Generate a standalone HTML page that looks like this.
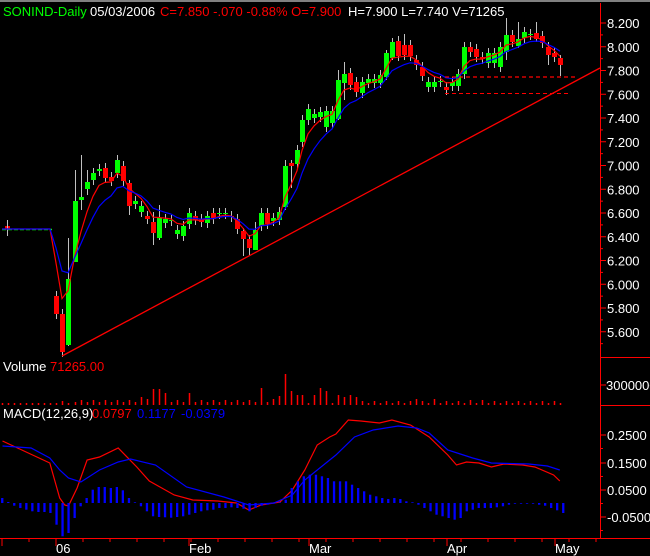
<!DOCTYPE html>
<html><head><meta charset="utf-8"><style>
html,body{margin:0;padding:0;background:#000;width:650px;height:556px;overflow:hidden}
svg{display:block}
text{font-family:"Liberation Sans",sans-serif;font-size:13px}
</style></head><body>
<svg id="s" width="650" height="556" viewBox="0 0 650 556" xmlns="http://www.w3.org/2000/svg">
<rect width="650" height="556" fill="#000"/>
<rect x="0" y="0" width="650" height="2" fill="#808080"/>
<text x="3" y="16" fill="#00ff00">SONIND-Daily</text>
<text x="90" y="16" fill="#fff">05/03/2006</text>
<text x="160" y="16" fill="#ff0000">C=7.850  -.070  -0.88%  O=7.900</text>
<text x="348" y="16" fill="#fff">H=7.900  L=7.740  V=71265</text>
<text x="3" y="371" fill="#fff">Volume</text>
<text x="50" y="371" fill="#ff0000">71265.00</text>
<text x="3" y="418" fill="#fff">MACD(12,26,9)</text>
<text x="92" y="418" fill="#ff0000">0.0797</text>
<text x="137" y="418" fill="#0000ff">0.1177</text>
<text x="181" y="418" fill="#0000ff">-0.0379</text>
<g id="g"></g>
</svg>
<script>
var g=document.getElementById('g'),h='';
function L(x1,y1,x2,y2,c,w,d){h+='<line x1="'+x1+'" y1="'+y1+'" x2="'+x2+'" y2="'+y2+'" stroke="'+c+'" stroke-width="'+(w||1)+'"'+(d?' stroke-dasharray="'+d+'"':'')+'/>';}
function T(x,y,t){h+='<text x="'+x+'" y="'+y+'" fill="#fff">'+t+'</text>';}
L(600.5,3,600.5,538,'#f00');
L(0,538.5,650,538.5,'#f00');
L(600,357.5,650,357.5,'#f00');L(600,405.5,650,405.5,'#f00');
var labs=['8.200','8.000','7.800','7.600','7.400','7.200','7.000','6.800','6.600','6.400','6.200','6.000','5.800','5.600'];
for(var i=0;i<labs.length;i++){var y=23+i*23.75;L(600,y,606,y,'#f00');T(607,y+5,labs[i]);
 L(600,y+11.9,603,y+11.9,'#f00');}
T(606,390,'3000000');L(600,385,606,385,'#f00');
[[435,'0.2500'],[463,'0.1500'],[490,'0.0500'],[517,'-0.0500']].forEach(function(a){L(600,a[0],606,a[0],'#f00');T(607,a[0]+5,a[1]);L(600,a[0]+13.5,603,a[0]+13.5,'#f00');});
[2,56,189,309,447,555].forEach(function(x){L(x,538,x,546,'#f00');});
for(var x=29;x<600;x+=27){L(x,538,x,542,'#f00');}
T(56,553,'06');T(189,553,'Feb');T(309,553,'Mar');T(447,553,'Apr');T(555,553,'May');
var C=[[56,296,314,0],[62,314,352,0],[68,345,279,1],[75,262,201,1],[81,200,197,1],[87,189,182,1],[93,180,173,1],[99,171,169,1],[105,168,178,0],[111,177,181,0],[117,173,160,1],[123,166,181,0],[129,183,206,0],[135,204,201,1],[141,212,206,1],[147,216,219,0],[153,222,233,0],[159,238,218,1],[165,223,219,1],[171,221,220,1],[177,234,230,1],[183,236,226,1],[189,224,213,1],[195,216,220,0],[201,219,222,0],[207,223,216,1],[213,213,219,0],[219,214,213,1],[225,214,213,1],[231,216,217,0],[237,219,229,0],[243,231,239,0],[249,239,248,0],[255,250,230,1],[261,226,213,1],[267,213,224,0],[273,221,218,1],[279,220,212,1],[285,207,166,1],[291,163,166,0],[297,164,150,1],
[302,142,120,1],[308,120,109,1],[314,118,114,1],[320,117,112,1],[326,127,111,1],[332,123,111,1],[338,119,80,1],[344,83,74,1],[350,73,85,0],[356,82,92,0],[362,93,82,1],[368,83,79,1],[374,83,79,1],[380,83,75,1],[386,77,53,1],[392,58,42,1],[398,41,56,0],[404,45,55,0],[410,45,56,0],[416,60,65,0],[422,67,76,0],[428,87,82,1],[434,87,82,1],[440,82,81,1],[446,87,90,0],[452,86,82,1],[458,86,74,1],[464,74,47,1],[470,47,52,0],[476,49,57,0],[482,57,59,0],[488,63,53,1],[494,63,53,1],[500,67,47,1],[506,52,35,1],[512,35,42,0],[518,46,39,1],[524,38,32,1],[530,35,34,1],[536,33,39,0],[542,36,43,0],[548,47,55,0],[554,53,57,0],[560,58,65,0]];
var wk={68:[238,346],75:[170,262],81:[155,210],87:[170,195],129:[180,215],153:[212,245],159:[205,240],243:[228,256],249:[235,255],255:[222,250],285:[160,210],291:[160,188],338:[70,120],344:[62,100],386:[50,80],392:[38,60],404:[34,60],506:[18,60],518:[22,48],536:[22,42],548:[42,65],560:[55,76]};
C.forEach(function(c){var t=Math.min(c[1],c[2]),b=Math.max(c[1],c[2]);var w=wk[c[0]]||[t-5,b+5];L(c[0]+0.5,w[0],c[0]+0.5,w[1],'#c0c0c0');
 h+='<rect x="'+(c[0]-2)+'" y="'+t+'" width="5" height="'+Math.max(1,b-t)+'" fill="'+(c[3]?'#00ff00':'#ff0000')+'"/>';});
h+='<rect x="5" y="226" width="5" height="3" fill="#ff0000"/>';L(7.5,220,7.5,236,'#c0c0c0');
L(2,229.5,52,229.5,'#00ff00',1.5,'4,2');
var xs=[],cs=[];for(var x=2;x<=50;x+=6){xs.push(x);cs.push(229);}C.forEach(function(c){xs.push(c[0]);cs.push(c[2]);});
function ema(n){var k=2/(n+1),e=cs[0],o=[];cs.forEach(function(v){e=e+k*(v-e);o.push(e);});return o;}
function pl(a,col){var p='';for(var i=0;i<a.length;i++)p+=xs[i]+','+a[i].toFixed(1)+' ';h+='<polyline points="'+p+'" fill="none" stroke="'+col+'" stroke-width="1.2"/>';}
pl(ema(4),'#ff0000');pl(ema(8),'#0000ff');
L(62,356,600,68,'#ff0000',1.3);
L(445,77,576,77,'#ff0000',1.3,'4,3');L(445,93.5,570,93.5,'#ff0000',1,'4,3');
var vh={153:16,159:16,165:12,285:31,261:17,320:17,326:14,302:10,314:10,297:10,291:14,273:6,279:9,338:10,350:10,356:8,344:8,189:12,141:8,147:6,416:6,434:6,482:5,470:5,386:4};
C.forEach(function(c){var v=vh[c[0]]||(2+(c[0]*7)%4);L(c[0]+0.5,405,c[0]+0.5,405-v,'#ff0000',1.5);});
for(var x=2;x<52;x+=6)L(x+0.5,405,x+0.5,403,'#ff0000',1.5);
var f=1.244;
function ml(pts,col){var p='';pts.forEach(function(q){p+=(q[0]*f).toFixed(1)+','+q[1]+' ';});h+='<polyline points="'+p+'" fill="none" stroke="'+col+'" stroke-width="1.2"/>';}
ml([[2,441],[40,463],[48,498],[52,505],[55,506],[62,488],[70,460],[80,457],[95,448],[110,467],[120,481],[140,495],[155,500],[175,501],[190,503],[200,510],[210,505],[225,502],[235,490],[245,470],[255,445],[265,437],[270,434],[280,420],[290,421],[305,423],[315,420],[330,425],[345,437],[360,455],[367,465],[375,462],[385,463],[395,467],[405,464],[420,465],[430,467],[445,475],[450,481]],'#ff0000');
ml([[2,446],[25,448],[40,458],[48,470],[55,478],[65,482],[80,470],[95,462],[105,459],[125,465],[150,487],[180,497],[200,505],[220,503],[235,495],[245,480],[270,455],[285,437],[300,430],[320,426],[335,428],[345,433],[360,450],[370,454],[380,458],[395,463],[425,464],[440,466],[450,470]],'#0000ff');
var hb=[15,3,-8,-15,-20,-25,-27,-27,-30,-65,-100,-90,-45,-10,15,40,48,48,45,48,38,15,0,-10,-25,-40,-42,-43,-44,-42,-40,-35,-30,-25,-22,-20,-15,-15,-13,-15,-17,-25,-15,-8,-5,-2,0,10,45,65,80,85,85,80,75,65,65,65,55,45,35,25,20,15,12,15,12,5,2,-5,-15,-25,-35,-40,-45,-50,-45,-25,-20,-15,-15,-15,-13,-10,-5,-2,-2,-2,-2,-5,-8,-15,-22,-30];
hb.forEach(function(v,i){var x=(5+i*14.55)/2.412;var y=503,hh=v/3;if(Math.abs(hh)<0.7)hh=hh<0?-0.7:0.7;h+='<rect x="'+(x-1).toFixed(1)+'" y="'+(hh>0?y-hh:y).toFixed(1)+'" width="2.3" height="'+Math.abs(hh).toFixed(1)+'" fill="#0000ff"/>';});
g.innerHTML=h;
</script>
</body></html>
